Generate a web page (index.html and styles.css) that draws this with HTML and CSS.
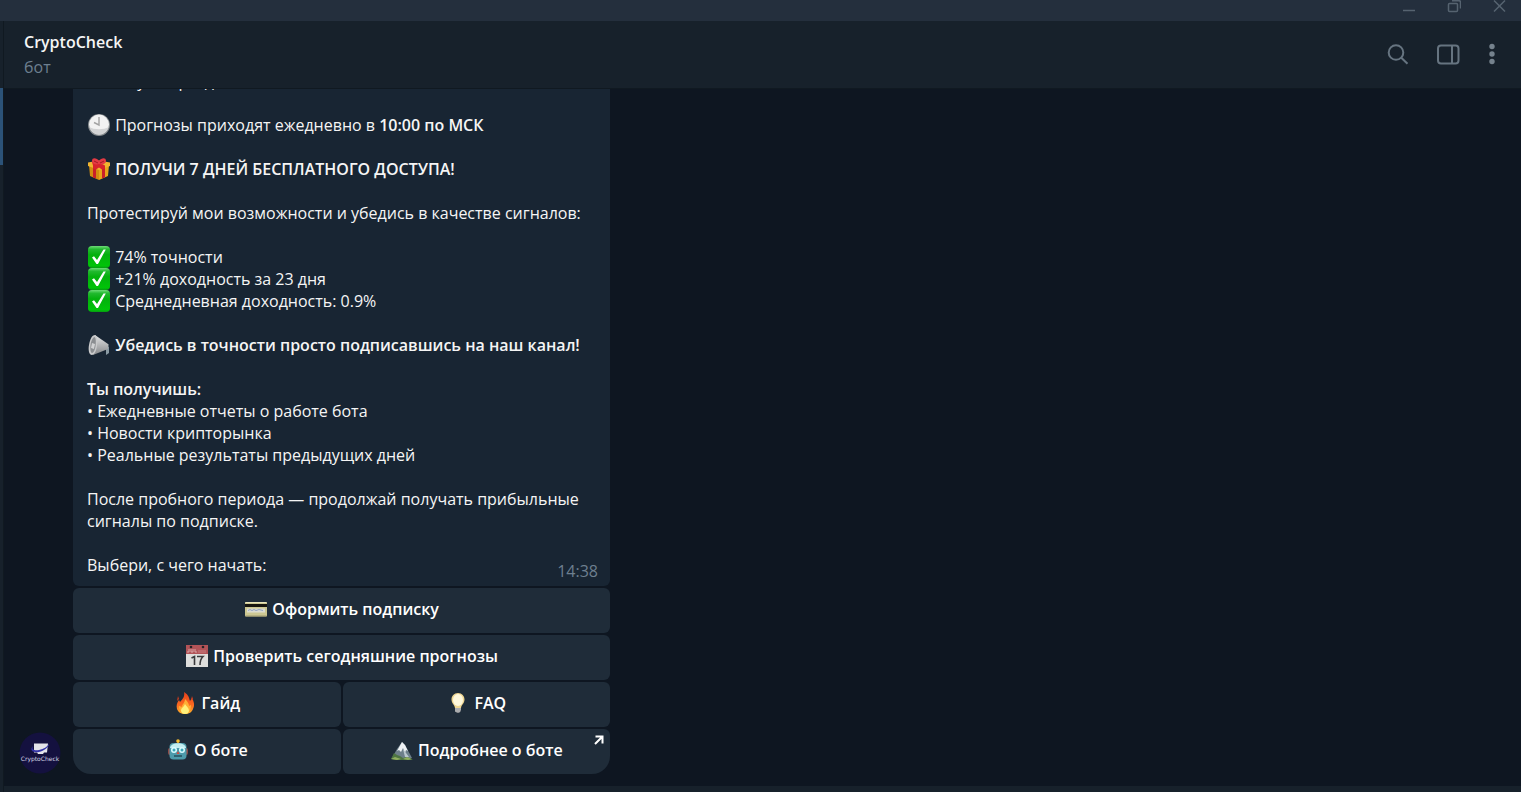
FILE: index.html
```html
<!DOCTYPE html>
<html lang="ru">
<head>
    <title>CryptoCheck</title>
    <meta charset="utf-8">
    <meta name="viewport" content="width=device-width, initial-scale=1">
    <link rel="stylesheet" href="styles.css">
</head>

<body>

    <!-- Shared emoji -->
    <svg class="sprite" aria-hidden="true">
        <defs>
            <linearGradient id="green" x1="0" y1="0" x2="0" y2="1">
                <stop offset="0" stop-color="#6fdc78"/>
                <stop offset="0.15" stop-color="#22b92f"/>
                <stop offset="0.4" stop-color="#04b00d"/>
                <stop offset="0.9" stop-color="#00c408"/>
                <stop offset="1" stop-color="#079a12"/>
            </linearGradient>
            <linearGradient id="horn" x1="0" y1="0" x2="0" y2="1">
                <stop offset="0" stop-color="#e4e5e6"/>
                <stop offset="1" stop-color="#858789"/>
            </linearGradient>
            <linearGradient id="flame" x1="0" y1="0" x2="0" y2="1">
                <stop offset="0" stop-color="#e8401c"/>
                <stop offset="0.6" stop-color="#fb6a1f"/>
                <stop offset="1" stop-color="#ffb62c"/>
            </linearGradient>
            <symbol id="check" viewBox="0 0 22 22">
                <rect x="0" y="0" width="22" height="22" rx="4" fill="url(#green)"/>
                <path d="M4 11.500l2-1.300 3 3.800L15.500 3.500h2.300L10 18H8.500z" fill="#fff"/>
            </symbol>
        </defs>
    </svg>

    <div class="titlebar">
        <button class="win-btn" aria-label="Свернуть">
            <svg width="14" height="14" viewBox="0 0 14 14"><path d="M1 10.500h12"/></svg>
        </button>
        <button class="win-btn" aria-label="Развернуть">
            <svg width="14" height="14" viewBox="0 0 14 14"><rect x="1.500" y="3.500" width="9" height="8" rx="1"/><path d="M5 .700H12a1.500 1.500 0 0 1 1.500 1.500V8.500"/></svg>
        </button>
        <button class="win-btn" aria-label="Закрыть">
            <svg width="14" height="14" viewBox="0 0 14 14"><path d="M2 .500l11 11M13 .500l-11 11"/></svg>
        </button>
    </div>

    <div class="window">
        <div class="rail"></div>
        <div class="column">
            <header class="header">
                <div>
                    <h1 class="name">CryptoCheck</h1>
                    <p class="status">бот</p>
                </div>
                <div class="tools">
                    <button class="tool" aria-label="Поиск">
                        <svg width="24" height="24" viewBox="0 0 24 24"><circle cx="10" cy="10.500" r="7.300"/><path d="M15.300 15.800l6.200 6"/></svg>
                    </button>
                    <button class="tool" aria-label="Информация">
                        <svg width="24" height="24" viewBox="0 0 24 24"><rect x="2" y="3.500" width="20.500" height="18" rx="3"/><path d="M16 3.500v18"/></svg>
                    </button>
                    <button class="tool" aria-label="Меню">
                        <svg width="12" height="24" viewBox="0 0 12 24" class="dots"><circle cx="6" cy="4.500" r="2.700"/><circle cx="6" cy="12" r="2.700"/><circle cx="6" cy="19.500" r="2.700"/></svg>
                    </button>
                </div>
            </header>

            <main class="chat">
                <svg class="avatar" viewBox="0 0 42 42" role="img" aria-label="CryptoCheck">
                    <circle cx="21" cy="21" r="20.500" fill="#14113f"/>
                    <path d="M15 11.500h14l-1 9h-3l-1 1.500h-5l-1-1.500h-3z" fill="#e4e4ea"/>
                    <path d="M14 14c-2 4 2 5 6 4 5-1 8-3 10-6 0 3-5 7-10 8-6 1-10-2-6-6z" fill="#3434a8"/>
                    <text x="21" y="29" class="avatar-text">CryptoCheck</text>
                </svg>

                <div class="post">
                    <div class="bubble">
                        <p>Покажу опоры дня</p>
                        <p><svg class="emoji" viewBox="0 0 22 22">
                            <circle cx="11" cy="11" r="11" fill="#868b8e"/>
                            <circle cx="11" cy="10.500" r="10" fill="#f2f2f2"/>
                            <path d="M1.500 13a9.700 9.700 0 0 0 19 0c-4 3-15 3-19 0z" fill="#d2d3d4"/>
                            <path d="M11 3v8L6 8.500" fill="none" stroke="#a3a3a3" stroke-width="1.400"/>
                        </svg> Прогнозы приходят ежедневно в <b>10:00 по МСК</b></p>
                        <p><svg class="emoji" viewBox="0 0 22 22">
                            <path d="M1 7l10 3v12L2 18z" fill="#d38d10"/>
                            <path d="M11 10l10-3-1 11-9 4z" fill="#e9a51b"/>
                            <path d="M0 4.500l11-2 11 2v3.500l-11 4L0 8z" fill="#f0b430"/>
                            <path d="M5 9.500l3 1v10l-3-1zM14 10.500l3-1v10l-3 1z" fill="#cb2029"/>
                            <path d="M4 4l4-1 9 4.500v3l-3 1-3-2-3 2-3-1v-3z" fill="#d8232c"/>
                            <path d="M11 6C8 7 4 6 4 3c0-4 5-3 7 0 2-3 7-4 7 0 0 3-4 4-7 3z" fill="#e43a43"/>
                            <path d="M6 3l4 2M16 3l-4 2" stroke="#a41b25"/>
                        </svg> <b>ПОЛУЧИ 7 ДНЕЙ БЕСПЛАТНОГО ДОСТУПА!</b></p>
                        <p>Протестируй мои возможности и убедись в качестве сигналов:</p>
                        <p><svg class="emoji"><use href="#check"/></svg> 74% точности<br>
                        <svg class="emoji"><use href="#check"/></svg> +21% доходность за 23 дня<br>
                        <svg class="emoji"><use href="#check"/></svg> Среднедневная доходность: 0.9%</p>
                        <p><svg class="emoji" viewBox="0 0 22 22">
                            <path d="M15 10h6v9l-3 2v-7h-3z" fill="#8a9aa3"/>
                            <path d="M18 10h3v3h-3z" fill="#5e6a72"/>
                            <path d="M7 1l13 9v5L5 21z" fill="url(#horn)"/>
                            <path d="M7 1c2 1 3 5 2 11-1 6-3 9-5 9-3 0-4-5-3-10C2 5 4 1 7 1z" fill="#c9cacb"/>
                            <path d="M6.500 3c1.500 1 1.500 5 1 9s-2 7-3.500 7-2-4-1.500-8S5 3 6.500 3z" fill="#8b8e91"/>
                            <path d="M4 9l3 1-1 5-3-1z" fill="#d0d1d2"/>
                        </svg> <b>Убедись в точности просто подписавшись на наш канал!</b></p>
                        <p><b>Ты получишь:</b><br>
                        • Ежедневные отчеты о работе бота<br>
                        • Новости крипторынка<br>
                        • Реальные результаты предыдущих дней</p>
                        <p>После пробного периода — продолжай получать прибыльные сигналы по подписке.</p>
                        <div class="last"><p>Выбери, с чего начать:</p><time class="time">14:38</time></div>
                    </div>

                    <div class="keyboard">
                        <button class="key wide"><svg class="emoji" viewBox="0 0 22 22">
                            <rect x="0" y="4" width="22" height="14.500" rx="1" fill="#cdc892"/>
                            <path d="M.500 4.500h21" stroke="#e9e5bd"/>
                            <path d="M0 7.500h22" stroke="#17150e" stroke-width="3"/>
                            <path d="M2 10.500h18v4H2z" fill="#dcdcd0"/>
                            <path d="M3 12.500l2-1 2 1 2-1 2 1 3-1 4 1" fill="none" stroke="#91a2c2"/>
                            <path d="M.500 18h21" stroke="#9c966c"/>
                        </svg> Оформить подписку</button>
                        <button class="key wide"><svg class="emoji" viewBox="0 0 22 22">
                            <path d="M0 0h22v22H0z" fill="#dededc"/>
                            <path d="M0 0h22v9H0z" fill="#b25458"/>
                            <path d="M3 4v3H1M5 4v3h2V4M9 4v3h2" fill="none" stroke="#d9a5a6"/>
                            <path d="M13 5v3M15 5v3M17 5v3M19 5v3" stroke="#c67d80"/>
                            <circle cx="5" cy="2" r="1.300" fill="#282326"/><circle cx="17" cy="2" r="1.300" fill="#282326"/>
                            <path d="M5.500 13l3-1.500V20M11 11.500h6c-2 2-3 5-3 8.500" fill="none" stroke="#3a3a3c" stroke-width="1.600"/>
                        </svg> Проверить сегодняшние прогнозы</button>
                        <button class="key"><svg class="emoji" viewBox="0 0 22 22">
                            <path d="M10 0c5 3 5 6 6 9l2-3c2 4 3 7 1 11-1 3-4 5-8 5s-7-2-8-5c-1-4 0-6 2-9l1 2c3-3 5-6 4-10z" fill="url(#flame)"/>
                            <path d="M11 7c3 3 4 5 4 7l2-1c0 5-2 8-6 8s-6-3-6-7l3 1c0-3 3-4 3-8z" fill="#ffae35"/>
                            <path d="M11 12c1 2 4 4 4 6.500S13 22 11 22s-4-1-4-3.500S10 15 11 12z" fill="#fff07a"/>
                            <path d="M4 4l1 3-2 2zM18 4l1 3-2 1z" fill="#d33c1d"/>
                        </svg> Гайд</button>
                        <button class="key"><svg class="emoji" viewBox="0 0 22 22">
                            <path d="M11 1c4 0 6.500 3 6.500 6.500 0 4-3 5-3.500 8.500H8c-.500-3.500-3.500-4.500-3.500-8.500C4.500 4 7 1 11 1z" fill="#efd691"/>
                            <ellipse cx="11" cy="8" rx="5" ry="6" fill="#fff8dc"/>
                            <path d="M8 16h6v3l-2 2h-2l-2-2z" fill="#85878b"/>
                            <path d="M8 17h6M8 19h5" stroke="#d0d0d0"/>
                        </svg> FAQ</button>
                        <button class="key"><svg class="emoji" viewBox="0 0 22 22">
                            <path d="M11 2v4" stroke="#b5802c" stroke-width="2"/><circle cx="11" cy="2" r="1.800" fill="#f4bd32"/>
                            <rect x="1" y="9" width="20" height="7" rx="2" fill="#8e4d4a"/>
                            <rect x="2.500" y="4" width="17" height="16.500" rx="4" fill="#4d9bab"/>
                            <path d="M3 9c0-6.500 16-6.500 16 0z" fill="#c2edf0"/>
                            <circle cx="7" cy="11" r="3" fill="#d9fbff"/><circle cx="15" cy="11" r="3" fill="#d9fbff"/>
                            <circle cx="7" cy="11" r="1.500" fill="#3ba8b8"/><circle cx="15" cy="11" r="1.500" fill="#3ba8b8"/>
                            <path d="M11 12l1.500 3h-3z" fill="#d34b3f"/><path d="M7 17h8" stroke="#254f5d" stroke-width="1.500"/>
                        </svg> О боте</button>
                        <button class="key"><svg class="emoji" viewBox="0 0 22 22">
                            <path d="M1 19l5-9 5-7 3 3 7 13z" fill="#6d7f8a"/>
                            <path d="M11 3l3 3 3 6-2-1-1 3-2-5-2 4-2-2-2 1z" fill="#eef2f4"/>
                            <path d="M12 10l6 8h-4z" fill="#bac7cf"/>
                            <path d="M0 20l3-6 3 2 3 1 3 2 4-1 6 3H5z" fill="#4d7442"/>
                            <path d="M0 20l4-2 6 2-4 1zM12 20l4-2 5 2-4 1z" fill="#8fae5f"/>
                        </svg> Подробнее о боте
                            <svg class="arrow" width="10" height="10" viewBox="0 0 10 10"><path d="M1.500 1.500h7v7M8 2L1 9"/></svg>
                        </button>
                    </div>
                </div>
            </main>
            <div class="bottom"></div>
        </div>
    </div>

</body>
</html>
```
FILE: styles.css
```css
* {
    box-sizing: border-box;
}

body {
    margin: 0;
    height: 100vh;
    display: flex;
    flex-direction: column;
    overflow: hidden;
    background-color: #0e1621;
    color: #f5f5f5;
    font-family: "Open Sans", sans-serif;
    font-size: 16px;
    line-height: 22px;
}

h1, p {
    margin: 0;
    font-size: 16px;
}

b, h1 {
    font-weight: 600;
}

button {
    border: 0;
    padding: 0;
    background: none;
    color: inherit;
    font: inherit;
}

.sprite {
    position: absolute;
    width: 0;
    height: 0;
}

/* window buttons */
.titlebar {
    height: 21px;
    flex-shrink: 0;
    display: flex;
    justify-content: flex-end;
    gap: 31px;
    padding-right: 15px;
    background-color: #242f3d;
}

.win-btn {
    display: flex;
}

.win-btn svg, .tool svg {
    fill: none;
    stroke: #566370;
    stroke-width: 1.5;
}

.window {
    flex: 1;
    min-height: 0;
    display: flex;
}

/* edge of the chat list, with the selected chat in blue */
.rail {
    width: 3px;
    padding-top: 67px;
    background-color: #17212b;
}

.rail::before {
    content: "";
    display: block;
    height: 77px;
    background-color: #2b5278;
}

.column {
    flex: 1;
    min-width: 0;
    display: flex;
    flex-direction: column;
    border-left: 1px solid #101921;
}

.header {
    height: 68px;
    flex-shrink: 0;
    display: flex;
    justify-content: space-between;
    padding: 10px 23px 0 20px;
    border-bottom: 1px solid #101921;
    background-color: #17212b;
}

.status {
    margin-top: 3px;
    color: #6d7f8f;
}

.tools {
    display: flex;
    align-items: center;
    gap: 26px;
    padding-bottom: 11px;
}

.tool {
    display: flex;
}

.tool svg {
    stroke: #667480;
    stroke-width: 2;
}

.tool .dots {
    fill: #75828d;
    stroke: none;
}

/* chat */
.chat {
    flex: 1;
    min-height: 0;
    display: flex;
    align-items: flex-end;
    gap: 12px;
    padding: 0 15px 12px;
    overflow: hidden;
}

.avatar {
    width: 42px;
    height: 42px;
    flex-shrink: 0;
}

.avatar-text {
    fill: #d5d5e5;
    font-family: "DejaVu Sans", sans-serif;
    font-size: 6px;
    text-anchor: middle;
}

.post {
    width: 537px;
}

.bubble {
    padding: 0 12px 4px 14px;
    border-radius: 0 0 6px 6px;
    background-color: #182533;
}

.bubble p {
    margin-bottom: 22px;
}

.bubble .last {
    display: flex;
    justify-content: space-between;
    align-items: flex-end;
}

.bubble .last p {
    margin-bottom: 6px;
}

.time {
    color: #6d7f8f;
}

.emoji {
    width: 22px;
    height: 22px;
    margin: 0 1px;
    vertical-align: top;
}

.keyboard {
    display: grid;
    grid-template-columns: 1fr 1fr;
    gap: 2px;
    margin-top: 2px;
}

.key {
    position: relative;
    height: 45px;
    padding-bottom: 3px;
    border-radius: 6px;
    background-color: #1f2c39;
    color: #fff;
    font-weight: 600;
}

.wide {
    grid-column: span 2;
}

.key:nth-last-child(2) {
    border-bottom-left-radius: 18px;
}

.key:last-child {
    border-bottom-right-radius: 18px;
}

.arrow {
    position: absolute;
    top: 6px;
    right: 6px;
    fill: none;
    stroke: #fff;
    stroke-width: 2;
}

.bottom {
    height: 6px;
    flex-shrink: 0;
    background-color: #17212b;
}
```
